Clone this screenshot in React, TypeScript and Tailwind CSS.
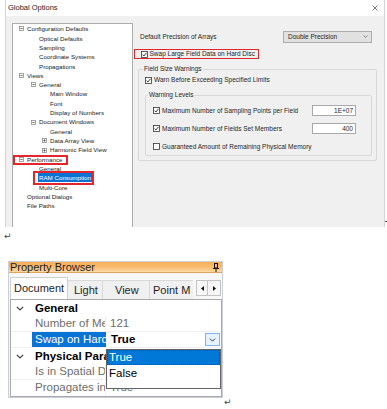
import React from 'react';

const tree = [
    { t: 'Configuration Defaults', lv: 0, box: '-' },
    { t: 'Optical Defaults', lv: 1 },
    { t: 'Sampling', lv: 1 },
    { t: 'Coordinate Systems', lv: 1 },
    { t: 'Propagations', lv: 1 },
    { t: 'Views', lv: 0, box: '-' },
    { t: 'General', lv: 1, box: '-' },
    { t: 'Main Window', lv: 2 },
    { t: 'Font', lv: 2 },
    { t: 'Display of Numbers', lv: 2 },
    { t: 'Document Windows', lv: 1, box: '-' },
    { t: 'General', lv: 2 },
    { t: 'Data Array View', lv: 2, box: '+' },
    { t: 'Harmonic Field View', lv: 2, box: '+' },
    { t: 'Performance', lv: 0, box: '-', mark: 'perf' },
    { t: 'General', lv: 1 },
    { t: 'RAM Consumption', lv: 1, sel: true, mark: 'ram' },
    { t: 'Multi-Core', lv: 1 },
    { t: 'Optional Dialogs', lv: 0 },
    { t: 'File Paths', lv: 0 },
];

const indent = ['pl-[6px]', 'pl-[18px]', 'pl-[29px]'];

function TreeBox({ plus }: { plus?: boolean }) {
    return (
        <svg width="5" height="5" viewBox="0 0 5 5" className="shrink-0">
            <rect x="0.5" y="0.5" width="4" height="4" fill="white" stroke="#8c8c8c" strokeWidth="0.8" />
            <line x1="1.4" y1="2.5" x2="3.6" y2="2.5" stroke="#333" strokeWidth="0.7" />
            {plus && <line x1="2.5" y1="1.4" x2="2.5" y2="3.6" stroke="#333" strokeWidth="0.7" />}
        </svg>
    );
}

function Check({ on }: { on?: boolean }) {
    return (
        <svg width="7" height="7" viewBox="0 0 7 7" className="shrink-0">
            <rect x="0.5" y="0.5" width="6" height="6" fill="white" stroke="#333" strokeWidth="0.8" />
            {on && <path d="M1.5 3.6 L2.9 5 L5.5 1.8" fill="none" stroke="#222" strokeWidth="0.9" />}
        </svg>
    );
}

function Chevron({ w = 8, h = 5, color = '#404040' }: { w?: number; h?: number; color?: string }) {
    return (
        <svg width={w} height={h} viewBox="0 0 8 5" className="shrink-0">
            <path d="M0.8 0.8 L4 4 L7.2 0.8" fill="none" stroke={color} strokeWidth="1.2" />
        </svg>
    );
}

export default function App() {
    return (
        <div className="h-[409px] w-[387px] overflow-hidden bg-white font-['Liberation_Sans',Arial,sans-serif] text-[#1e1e1e]">
            {/* Global Options dialog */}
            <div className="flex items-end">
                <div className="ml-[5px] flex h-[227px] w-[380px] flex-col border-x border-[#d4d4d4] bg-[#f0f0f0]">
                    <div className="flex h-[16px] shrink-0 items-center justify-between bg-white pl-[2px] pr-[6px]">
                        <span className="text-[7.5px] text-[#1a1a1a]">Global Options</span>
                        <svg width="6" height="6" viewBox="0 0 6 6">
                            <path d="M0.5 0.5 L5.5 5.5 M5.5 0.5 L0.5 5.5" stroke="#555" strokeWidth="0.8" />
                        </svg>
                    </div>
                    <div className="flex flex-1 pl-[6px] pt-[7px] text-[6.5px]">
                        {/* tree */}
                        <div className="w-[121px] shrink-0 border border-b-0 border-[#adadad] bg-white pt-[0.3px] text-[6.2px] text-[#202020]">
                            {tree.map((r, i) => (
                                <div key={i} className={`relative flex h-[9.32px] items-center leading-[9.32px] ${indent[r.lv]}`}>
                                    <span className="flex w-[8px] shrink-0">
                                        {r.box && <TreeBox plus={r.box === '+'} />}
                                    </span>
                                    <span className={r.sel ? '-ml-[1px] bg-[#0a74d6] px-[1px] leading-[9px] text-white' : ''}>
                                        {r.t}
                                    </span>
                                    {r.mark === 'perf' && (
                                        <span className="absolute left-0 top-0 h-[10px] w-[55px] border-2 border-[#e3262b]" />
                                    )}
                                    {r.mark === 'ram' && (
                                        <span className="absolute left-[20px] top-[-2px] h-[14px] w-[61px] border-2 border-[#e3262b]" />
                                    )}
                                </div>
                            ))}
                        </div>

                        {/* settings */}
                        <div className="w-[244px] shrink-0 pt-[7px]">
                            <div className="flex h-[13px] items-center pl-[7px] pr-[5px]">
                                <span>Default Precision of Arrays</span>
                                <div className="ml-auto flex h-[12px] w-[89px] items-center justify-between border border-[#adadad] bg-[#e1e1e1] pl-[4px] pr-[3px]">
                                    <span>Double Precision</span>
                                    <Chevron w={5} h={3} color="#666" />
                                </div>
                            </div>

                            <div className="ml-[1px] mt-[6px] flex h-[10px] w-[125px] items-center gap-[2px] border-[1.5px] border-[#e3262b] pl-[5.5px]">
                                <Check on />
                                <span>Swap Large Field Data on Hard Disc</span>
                            </div>

                            <fieldset className="ml-[5px] mt-[6px] w-[239px] rounded-[2px] border border-[#d8d8d8] px-[6px] pb-[4px]">
                                <legend className="-ml-[2px] px-[1px] leading-[8px]">Field Size Warnings</legend>
                                <div className="mt-[3px] flex h-[8px] items-center gap-[2px]">
                                    <Check on />
                                    <span>Warn Before Exceeding Specified Limits</span>
                                </div>
                                <fieldset className="-mr-[2px] mt-[7px] rounded-[2px] border border-[#d8d8d8] px-[7px] pb-[3px]">
                                    <legend className="-ml-[5px] px-[1px] leading-[8px]">Warning Levels</legend>
                                    <div className="mt-[6px] flex flex-col gap-[7px]">
                                        <div className="flex h-[11px] items-center gap-[2px]">
                                            <Check on />
                                            <span>Maximum Number of Sampling Points per Field</span>
                                            <div className="ml-auto mr-[8px] flex h-[11px] w-[44px] items-center justify-end border border-[#a8a8a8] bg-white pr-[2px]">
                                                1E+07
                                            </div>
                                        </div>
                                        <div className="flex h-[11px] items-center gap-[2px]">
                                            <Check on />
                                            <span>Maximum Number of Fields Set Members</span>
                                            <div className="ml-auto mr-[8px] flex h-[11px] w-[44px] items-center justify-end border border-[#a8a8a8] bg-white pr-[2px]">
                                                400
                                            </div>
                                        </div>
                                        <div className="flex h-[11px] items-center gap-[2px]">
                                            <Check />
                                            <span>Guaranteed Amount of Remaining Physical Memory</span>
                                        </div>
                                    </div>
                                </fieldset>
                            </fieldset>
                        </div>
                    </div>
                </div>
                <span className="mb-[5px] h-[1px] w-[2px] bg-[#555]" />
            </div>

            {/* paragraph mark */}
            <div className="h-[34px] pl-[4px] pt-[4px] font-['DejaVu_Sans',sans-serif] text-[9px] leading-[10px] text-[#444]">↵</div>

            {/* Property Browser */}
            <div className="flex items-start">
                <div className="ml-[8px] w-[215px] border border-[#c9d0db] bg-[#f7f7f7]">
                    <div className="flex h-[11px] items-center justify-between border-b border-[#e0a55c] bg-linear-to-b from-[#f8ae58] via-[#f9bb6e] to-[#fcd8a4] pl-[1px] pr-[3px]">
                        <span className="text-[11px] leading-[11px] text-[#1e1e1e]">Property Browser</span>
                        <svg width="6" height="9" viewBox="0 0 6 9">
                            <rect x="1.5" y="0.5" width="3" height="4.5" fill="none" stroke="#111" strokeWidth="1" />
                            <line x1="0" y1="5.5" x2="6" y2="5.5" stroke="#111" strokeWidth="1" />
                            <line x1="3" y1="5.5" x2="3" y2="9" stroke="#111" strokeWidth="1" />
                        </svg>
                    </div>

                    <div className="flex h-[26px] items-end pl-[1px] text-[11px]">
                        <div className="flex w-[183px] items-end overflow-hidden">
                            <div className="flex h-[22px] w-[58px] shrink-0 items-center border border-b-0 border-[#cfcfcf] bg-white pl-[3px]">
                                Document
                            </div>
                            <div className="flex h-[19px] w-[35px] shrink-0 items-center border-r border-t border-[#d9d9d9] bg-[#f0f0f0] pl-[6px]">
                                Light
                            </div>
                            <div className="flex h-[19px] w-[47px] shrink-0 items-center border-r border-t border-[#d9d9d9] bg-[#f0f0f0] pl-[12px]">
                                View
                            </div>
                            <div className="flex h-[19px] w-[43px] shrink-0 items-center overflow-hidden whitespace-nowrap border-t border-[#d9d9d9] bg-[#f0f0f0] pl-[3px]">
                                Point M
                            </div>
                        </div>
                        <div className="mb-[3px] ml-[3px] flex">
                            <div className="flex h-[16px] w-[12px] items-center justify-center border border-[#c4c4c4] bg-[#f7f7f7]">
                                <svg width="3" height="5" viewBox="0 0 3 5"><path d="M3 0 L0 2.5 L3 5 Z" fill="#111" /></svg>
                            </div>
                            <div className="flex h-[16px] w-[13px] items-center justify-center border border-l-0 border-[#c4c4c4] bg-[#f7f7f7]">
                                <svg width="3" height="5" viewBox="0 0 3 5"><path d="M0 0 L3 2.5 L0 5 Z" fill="#111" /></svg>
                            </div>
                        </div>
                    </div>

                    <div className="relative ml-[1px] w-[212px] border border-[#a9a9a9] bg-white text-[11.5px] leading-[15px]">
                        <div className="flex h-[16px] items-center">
                            <span className="w-[21px] pl-[5px]"><Chevron /></span>
                            <span className="pl-[3px] font-bold text-black">General</span>
                        </div>
                        <div className="flex h-[16px] border-b border-[#f0f0f0] text-[#6d6d6d]">
                            <span className="w-[21px] shrink-0" />
                            <span className="w-[74px] shrink-0 overflow-hidden whitespace-nowrap border-r border-[#f0f0f0] pl-[3px]">Number of Mer</span>
                            <span className="pl-[4px]">121</span>
                        </div>
                        <div className="flex h-[16px] items-center border-b border-[#f0f0f0]">
                            <span className="w-[21px] shrink-0" />
                            <span className="h-full w-[74px] shrink-0 overflow-hidden whitespace-nowrap bg-[#0a74d6] pl-[3px] text-white">Swap on Hard</span>
                            <span className="pl-[5px] font-bold text-black">True</span>
                            <div className="ml-auto mr-[1px] flex h-[13px] w-[15px] items-center justify-center border border-[#7eb4ea] bg-[#e5f1fb]">
                                <Chevron w={7} h={4} color="#333" />
                            </div>
                        </div>
                        <div className="flex h-[16px] items-center">
                            <span className="w-[21px] pl-[5px]"><Chevron /></span>
                            <span className="w-[74px] overflow-hidden whitespace-nowrap pl-[3px] font-bold text-black">Physical Para</span>
                        </div>
                        <div className="flex h-[16px] border-b border-[#f0f0f0] text-[#6d6d6d]">
                            <span className="w-[21px] shrink-0" />
                            <span className="w-[74px] shrink-0 overflow-hidden whitespace-nowrap border-r border-[#f0f0f0] pl-[3px]">Is in Spatial De</span>
                            <span className="pl-[4px]">True</span>
                        </div>
                        <div className="flex h-[16px] text-[#6d6d6d]">
                            <span className="w-[21px] shrink-0" />
                            <span className="w-[74px] shrink-0 overflow-hidden whitespace-nowrap border-r border-[#f0f0f0] pl-[3px]">Propagates in</span>
                            <span className="pl-[4px]">True</span>
                        </div>

                        {/* open dropdown list */}
                        <div className="absolute left-[95px] top-[49px] h-[40px] w-[115px] border border-[#646464] bg-white">
                            <div className="flex h-[15px] items-center border border-dotted border-[#4a3a20] bg-[#0078d7] pl-[1px] text-white">
                                True
                            </div>
                            <div className="flex h-[16px] items-center pl-[2px] text-black">False</div>
                        </div>
                    </div>
                </div>
                <span className="ml-[1px] mt-[136px] font-['DejaVu_Sans',sans-serif] text-[9px] leading-[10px] text-[#444]">↵</span>
            </div>
        </div>
    );
}
